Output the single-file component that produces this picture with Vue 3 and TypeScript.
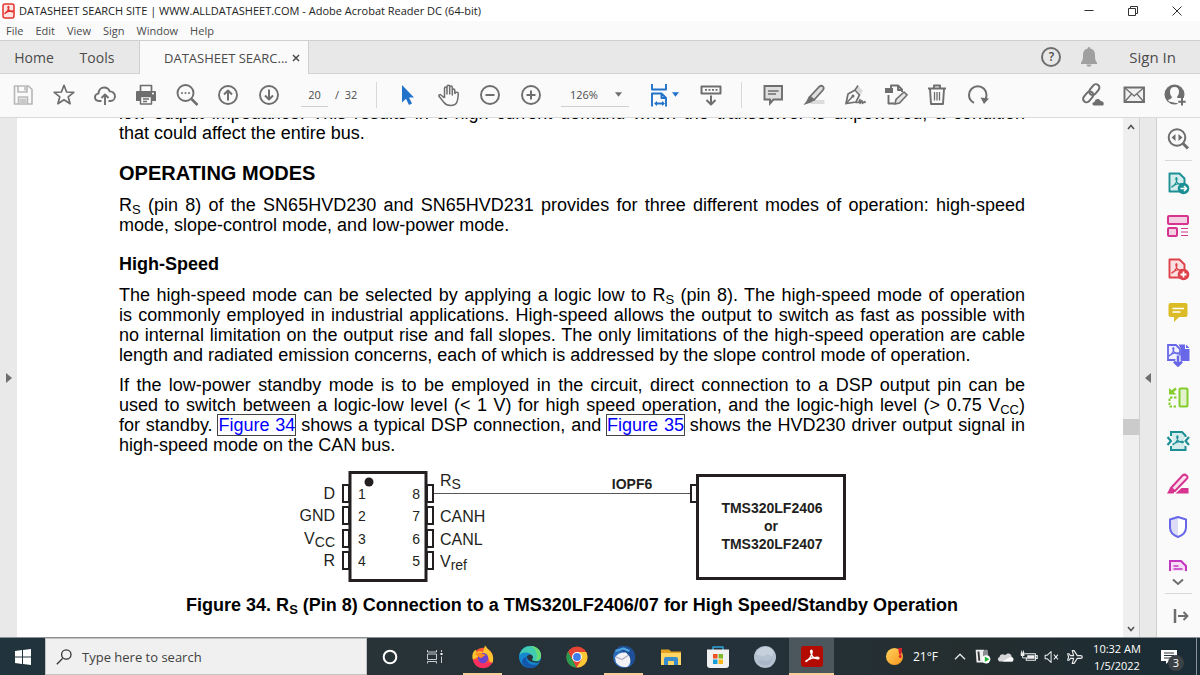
<script setup lang="ts">
import { ref } from 'vue'

interface Tool {
  name: string
  icon: string
}

const G = '#6e6e6e'
const line = (d: string, color = G, width = 1.7) =>
  `<path d="${d}" fill="none" stroke="${color}" stroke-width="${width}" stroke-linejoin="round"/>`
const solid = (d: string, color = G) => `<path d="${d}" fill="${color}"/>`
const trefoil = (color: string, width: number) =>
  line('M6 17c3-2 5.600-6 5.800-9.500.1-2-1.600-2-1.400 0 .3 3.500 3 6.500 6.800 7 2 .2 1.800-1.500 0-1.500-3.800 0-7.500 1.200-10.700 3-1.300.8-.9 1.500-.5 1z', color, width)

const fileTools: Tool[] = [
  { name: 'Save', icon: line('M3.500 3h14l3.500 3.500V21h-17.500zM7 3v6h9V3M7.500 21v-7h9v7', '#b9b9b9') + solid('M13 4h2v3.500h-2zM8.500 15.500h7V20h-7z', '#c9c9c9') },
  { name: 'Bookmark', icon: line('M12 2.300l2.600 6.700 7.200.3-5.600 4.500 1.900 6.900L12 16.800l-6.100 3.900 1.900-6.900-5.600-4.500 7.200-.3z') },
  { name: 'Upload to cloud', icon: line('M8.500 18H6.200C3.500 18 2 16.300 2 14.300s1.500-3.500 3.500-3.700C5.600 6.800 8 4.500 11.200 4.500c2.800 0 4.600 1.500 5.500 3.900 3-.1 5.300 2 5.300 4.800 0 2.700-2 4.800-4.700 4.800h-1.800M12 22v-10M8.500 15l3.500-3.500 3.500 3.500', G, 1.900) },
  { name: 'Print', icon: line('M6.500 8V2.500h11V8') + solid('M3 8h18q1 0 1 1v9h-4v-4H6v4H2V9q0-1 1-1z') + line('M6.500 13.500h11v7.500h-11zM9 16h6M9 18.500h4', G, 1.500) + '<circle cx="19" cy="10.500" r="1" fill="#fff"/>' },
  { name: 'Find', icon: '<circle cx="10.500" cy="10" r="8" fill="none" stroke="#6e6e6e" stroke-width="1.900"/>' + line('M16.500 16l6 6', G, 2.500) + '<g fill="#6e6e6e"><circle cx="7" cy="10" r="1"/><circle cx="10.500" cy="10" r="1"/><circle cx="14" cy="10" r="1"/></g>' },
  { name: 'Previous page', icon: '<circle cx="12" cy="12" r="9" fill="none" stroke="#6e6e6e" stroke-width="1.900"/>' + line('M12 17.500V7.500M8 11.500l4-4 4 4', G, 2) },
  { name: 'Next page', icon: '<circle cx="12" cy="12" r="9" fill="none" stroke="#6e6e6e" stroke-width="1.900"/>' + line('M12 6.500v10M8 12.500l4 4 4-4', G, 2) },
]

const viewTools: Tool[] = [
  { name: 'Select', icon: solid('M6 2v17.500l4-3.800 3 6.300 3-1.400-3-6.100h5z', '#2272c9') },
  { name: 'Pan', icon: line('M7.500 13V5.500c0-2 2.500-2 2.500 0V11 3.700c0-2 2.700-2 2.700 0V11 4.500c0-2 2.600-2 2.600 0V12 7.500c0-2 2.500-2 2.500 0v3M7.500 15V7.500M17.800 11c.5-2.500 3.700-2.300 3.500 0-.2 2-.3 5.500-1.300 8-1 2.500-3 3.500-6.500 3.500s-5-1-6.500-3l-5-6.200c-.8-1.300 1-2.300 2-1.300L7.500 15', G, 1.500) },
  { name: 'Zoom out', icon: '<circle cx="12" cy="12" r="9" fill="none" stroke="#6e6e6e" stroke-width="1.900"/>' + line('M7.500 12h9', G, 2) },
  { name: 'Zoom in', icon: '<circle cx="12" cy="12" r="9" fill="none" stroke="#6e6e6e" stroke-width="1.900"/>' + line('M7.500 12h9M12 7.500v9', G, 2) },
]

const fitIcon = line('M5 1v5.500h14V1M5 23.500V10.500h9.500l4.500 4.500v8.500M14.500 10.500V15H19M9 20.500h7.500', '#2272c9', 1.900) + solid('M7 20.500l3-2.500v5zM18 20.500l-3-2.500v5z', '#2272c9')
const readIcon = line('M2.500 3.500h19v7h-19zM12 12.500v9M7.500 17l4.500 4.500 4.500-4.500', G, 2) + line('M6 6.800h2M9.500 6.800h2M13 6.800h2M16.500 6.800h2', G, 1.700)

const markupTools: Tool[] = [
  { name: 'Comment', icon: '<path d="M3.500 3h17.500v13.500h-8.500L9 20.500v-4H3.500z" fill="#dedede" stroke="#6e6e6e" stroke-width="1.900"/>' + line('M7 8h10.500M7 11h8', G, 1.300) },
  { name: 'Highlight', icon: solid('M10 17h12.500v4H8z', '#dcdcdc') + '<path d="M8 13.500L17.500 3.500q2-1.500 3.500 0t0 3.500L12 17z" fill="#dedede" stroke="#6e6e6e" stroke-width="1.700"/>' + solid('M7 13l5 4.500-3 2L1.500 22l3-4z') },
  { name: 'Sign', icon: '<path d="M3 20.500l2-9.500 7-4 4.500 5-3.500 7z" fill="#fafafa" stroke="#6e6e6e" stroke-width="1.700"/>' + solid('M12.500 6.500l2.500-4 5 5.500-3 3.500z', '#dadada') + line('M12 7l3-4.500M3.500 20l6-6.500M12.500 19.500h3l1.500-3v4l2-3 .500 3 2-2 1 1.500', G, 1.500) + '<circle cx="10" cy="13" r="1.500" fill="#6e6e6e"/>' },
  { name: 'Edit PDF', icon: solid('M1 5h8v5H1z') + line('M7 5V2.500h7l4 4V9M14 2.500V7h4M4.500 12v8.500h6', G, 1.900) + '<path d="M11 21l1-4.500 8-7.500 3 3-7.500 8z" fill="#e6e6e6" stroke="#6e6e6e" stroke-width="1.600"/>' },
  { name: 'Delete', icon: line('M3 5.500h18M9 5V2.500h6V5M5 6l1 15h12l1-15', G, 1.900) + line('M9.500 9v8.500M12 9v8.500M14.500 9v8.500', G, 1.300) },
  { name: 'Rotate', icon: line('M8 19.800c-3-1.500-5-4-5-7.800 0-5 4-8.800 8.800-8.800S20.500 7 20.500 12c0 2-.5 3.500-1.500 5', G, 2) + solid('M14.500 14.500l8.500 1-5 5.500z') },
]

const shareTools: Tool[] = [
  { name: 'Share link', icon: '<g transform="rotate(-50 10 11)">' + '<rect x="9.500" y="7.300" width="12" height="6.800" rx="3.400" fill="none" stroke="#6e6e6e" stroke-width="2"/><rect x="0" y="7.300" width="12" height="6.800" rx="3.400" fill="none" stroke="#6e6e6e" stroke-width="2"/></g>' + solid('M13 22.500c-2.300-.5-2-3.500.5-3.500.3-3.500 5-4.200 6-1 3-.2 4.200 3 2.500 4.500z') },
  { name: 'Email', icon: '<path d="M2.500 4.500h19.500v14.500h-19.500z" fill="#f1f1f1" stroke="#6e6e6e" stroke-width="1.900"/>' + line('M3 5l9.200 8L21.500 5M3 18.500l6.500-7.500M21.500 18.500L15 11', G, 1.300) },
  { name: 'Add people', icon: '<circle cx="11.500" cy="11.500" r="10" fill="#6e6e6e"/>' + '<path d="M11.500 4c3 0 4.500 2 4.500 4.800 0 2-.7 3.600-1.800 4.700-.3 1.500.2 1.900 3.800 3.300l-1 3.200h-4l-7-1.500-1-1.500c3-1.300 4-1.800 3.800-3.300C7.500 12.500 7 10.800 7 8.800 7 6 8.500 4 11.500 4z" fill="#fafafa"/>' + solid('M14.500 15h9.500v9h-9.500z', '#fafafa') + line('M19 15v7.500M15.200 18.800h7.500', G, 2) },
]

const doc = (c: string, bg: string) =>
  `<path d="M3.500 2.500h10l5 5V20.500h-15z" fill="${bg}" stroke="${c}" stroke-width="1.900" stroke-linejoin="round"/>` +
  `<g transform="translate(1 1.500) scale(.85)">${trefoil(c, 1.300)}</g>`

const sideTools: Tool[] = [
  { name: 'Export PDF', icon: doc('#1c9094', '#d5ecec') + '<circle cx="17.500" cy="17.500" r="5.800" fill="#1c9094"/>' + line('M14.500 17.500h5.500M18 15l2.500 2.500L18 20', '#fff', 1.600) },
  { name: 'Organize Pages', icon: '<g fill="#f4cfe3" stroke="#d6348e" stroke-width="2"><rect x="2" y="2" width="20" height="8" rx="1"/><rect x="2" y="14" width="9" height="8" rx="1"/></g>' + line('M15 14.500h7M15 18h7M15 21.500h7', '#d6348e', 1.200) },
  { name: 'Create PDF', icon: doc('#dd4149', '#fbe0e1') + '<circle cx="17.500" cy="17.500" r="5.800" fill="#dd4149"/>' + line('M14.500 17.500h6M17.500 14.500v6', '#fff', 1.800) },
  { name: 'Comment', icon: solid('M4.500 3h15q2 0 2 2v10q0 2-2 2H13l-5 5v-5H4.500q-2 0-2-2V5q0-2 2-2z', '#dcbc26') + line('M6.500 8.500h11.500M6.500 12h8', '#fff', 1.700) },
  { name: 'Combine Files', icon: '<path d="M2 2h8l4 4v11H2z" fill="#efefff" stroke="#6767e8" stroke-width="1.800"/>' + '<g transform="translate(-1 0) scale(.75)">' + trefoil('#6767e8', 1.500) + '</g>' + solid('M12.500 1.500H19V6h4.500v12H15V6z', '#6767e8') + solid('M20 1.500l3.500 3.500H20z', '#6767e8') + line('M12 12.500v10M8 18.500l4 4 4-4', '#fafafa', 5) + line('M12 12.500v9.500M8 18.500l4 4 4-4', '#6767e8', 2.600) },
  { name: 'Compare', icon: '<rect x="13.500" y="2.500" width="8" height="18" rx="1" fill="#e3f3cd" stroke="#84cd2f" stroke-width="2"/>' + '<path d="M10.500 11.500h-7v9h8" fill="none" stroke="#84cd2f" stroke-width="2" stroke-dasharray="2.500 1.500"/>' + line('M10 2.500L5 6.500', '#84cd2f', 2.500) + solid('M3 2v6.500h7.500z', '#84cd2f') },
  { name: 'Compress PDF', icon: solid('M5 4h11l3.500 3-2.500 5 2.500 5v3H5v-3l2.500-5L5 7z', '#d5ecec') + '<path d="M5 7V3h11l3.500 3.500V8M5 17v4h14.500v-4" fill="none" stroke="#1c9094" stroke-width="2"/>' + '<g transform="translate(2.500 2) scale(.8)">' + trefoil('#1c9094', 1.500) + '</g>' + line('M1.500 8l3.500 4-3.500 4M23 8l-3.500 4 3.500 4', '#1c9094', 2.200) },
  { name: 'Redact', icon: '<path d="M5 16L16.500 3.500q2-1.800 4 0t0 3.500L9 19z" fill="#fae0ed" stroke="#d6348e" stroke-width="2"/>' + solid('M1 21.500l3-5.500 5 3-1.500 2.500zM9.500 21.500l6-5.500H22.500v5.500z', '#d6348e') },
  { name: 'Protect', icon: '<path d="M12 2l8 2.500v8c0 4.500-4 8-8 9.500-4-1.500-8-5-8-9.500v-8z" fill="#fff"/>' + solid('M12 2v20c-4-1.500-8-5-8-9.500v-8z', '#dcdcf6') + line('M12 2l8 2.500v8c0 4.500-4 8-8 9.500-4-1.500-8-5-8-9.500v-8z', '#6767e8', 2) },
  { name: 'Fill & Sign', icon: '<path d="M4 21V3h11l5 5v13z" fill="#f6dcf5" stroke="#c235be" stroke-width="2"/>' + line('M7.500 8h5M7.500 11h9', '#c235be', 1.500) },
]

const sideSearch = '<circle cx="11" cy="10.500" r="8.300" fill="none" stroke="#6e6e6e" stroke-width="2"/>' + line('M17 16.500l5 5', G, 3) + solid('M5.500 10.500l4-3.500v7zM16.500 10.500l-4-3.500v7z')
const collapse = line('M9 5v14', G, 2.500) + line('M12 12h9M17.500 8l4 4-4 4', G, 2)

const apps: (Tool & { state?: string })[] = [
  { name: 'Firefox', state: 'open', icon: '<circle cx="12" cy="13" r="10.200" fill="#fd5a32"/>' + solid('M2 15C.5 10 2 7 4.500 4.500l1 3C8 5.500 10 6 12 7l2-6.500c2 2 2 3 5 5.500 3 3.500 4 8 2.500 12-2 1-3-1-4-5-1-2-4-4-6.500-4z', '#ffc52f') + solid('M2 14c1 6 6 9.500 11 9 4-.4 7-2.500 8.500-6L16 18z', '#fb2e61') + '<circle cx="12" cy="13" r="5.200" fill="#6c45ce"/>' + solid('M4 9c3-2 6-1 8 0l3 1-3 1.500c-1 2-3 1.500-4 .5z', '#ff8a22') },
  { name: 'Microsoft Edge', icon: '<circle cx="12" cy="12" r="11" fill="#1687cf"/>' + solid('M1.500 10C3 4 8 .8 13 1c6 .3 10.500 5 10 10.500-.4 4-5 5.500-8.500 4-1.500-.7 1-2 .3-4C13 7 5 6 1.500 10z', '#42cbb1') + solid('M13 1c6 .3 10.500 5 10 10.500-.4 3-3 4.500-5.500 4.500C21 10 18 4 13 1z', '#68dc72') + solid('M8.500 12c-1 5 4 9 11.500 7.500-3 4-9 4.500-13 2C2 18 4 12.500 8.500 12z', '#1458ac') + solid('M14.500 15.500c-1.500-.8 1-2 .3-4-1-2.500-4.500-2.200-6-.2 0 3.500 3.500 7 12.500 6.300l1-1.600c-2.500 1-5.500.5-7.800-.5z', '#26333a') },
  { name: 'Google Chrome', icon: '<circle cx="12" cy="12" r="10.500" fill="#e54435"/>' + solid('M3 6.500L11.500 22.500C4 22.500 -1.500 14 3 6.500z', '#299c50') + solid('M12 7h9.200c4 8-2 16-9.700 15.500L17 14z', '#fcc934') + '<circle cx="12" cy="12" r="5" fill="#fff"/><circle cx="12" cy="12" r="3.900" fill="#3f7de8"/>' },
  { name: 'Thunderbird', state: 'open', icon: '<circle cx="12" cy="12" r="10.800" fill="#2b6cb8"/>' + solid('M8 1c5 0 10 0 13 4s3 12-2 16C19 12 16 7 4 5z', '#1e4f96') + solid('M3 12.500c2-3.500 6-5.500 11-5l3.500 4c1.500 4 1 7-1.500 10-5 1.500-10-.5-12-4z', '#f2f2f7') + line('M4 12l6 2.500 6-4', '#aaa9bf', 1.200) + line('M3.500 6l8-2.500 6 2.500', '#4fa5e2', 2) },
  { name: 'File Explorer', icon: solid('M2 4.500h8l2 2h10V20H2z', '#e2a322') + solid('M2 8h20v12H2z', '#ffd563') + solid('M5 20v-6q0-2 2-2h10q2 0 2 2v6h-4v-4H9v4z', '#388cce') },
  { name: 'Microsoft Store', icon: line('M7 5V2h10v3', '#30a5dc', 1.500) + '<path d="M1 4.500h22V20q0 3-3 3H4q-3 0-3-3z" fill="#f1f1f1"/><path fill="#f05023" d="M7 9h4.500v4.500H7z"/><path fill="#7db928" d="M12.500 9H17v4.500h-4.500z"/><path fill="#169edb" d="M7 14.500h4.500V19H7z"/><path fill="#fbb718" d="M12.500 14.500H17V19h-4.500z"/>' },
  { name: 'Moon', icon: '<circle cx="12" cy="12" r="11" fill="#b4c1d1"/>' + solid('M3 8c4-7 13-8 17-2 1 5-1 6-4 4s-4 3-7 1-4 1-6-3z', '#c5d0dc') + solid('M5 16c4-3 8 2 12-1s2 4-3 5-8-1-9-4z', '#a9b6c9') },
  { name: 'Adobe Acrobat', state: 'active', icon: '<rect x="1" y="1" width="22" height="21" rx="3" fill="#b30b00"/>' + '<g transform="translate(.3 -.7)">' + trefoil('#fff', 1.500) + '</g>' },
]

const trayIcons: Tool[] = [
  { name: 'Show hidden icons', icon: line('M6.500 14.500L12 9l5.500 5.500', '#eee', 1.300) },
  { name: 'Virtual machine', icon: solid('M4 4h9l1 14H5z', '#eee') + solid('M6 6h2l1 10H7z', '#333') + solid('M14 4h3l1 8-6 4V6z', '#8b8f92') + '<circle cx="15.500" cy="14.500" r="4.500" fill="#fff"/>' + solid('M14 11.500l5 3-5 3z', '#22b833') },
  { name: 'OneDrive', icon: solid('M6 17c-3 0-4-4-1-5 0-3 4-4 6-2 3-4 8-1 7 2 3 0 3 5 0 5z', '#d7d7d7') + solid('M8 17l9-5c3 0 4 5 1 5z', '#fff') },
  { name: 'Battery', icon: line('M7 8.500h12v7H9v-3M19.500 10.500h1.500v3h-1.500', '#eee', 1.200) + solid('M10 10h8v4h-8zM3 7h4v4H3z', '#eee') + line('M5 10v3h5M4 5v3M6 5v3', '#eee', 1) },
  { name: 'Volume muted', icon: line('M4.500 10h2.500l4-4v12l-4-4H4.500zM14 9.500l4.500 5M18.500 9.500l-4.500 5', '#eee', 1.100) },
  { name: 'Airplane mode', icon: line('M20 12c0 1-1 1.500-2 1.500h-3.500L11 19H9l1.500-5.500H7L5.500 15.500H4L5 12 4 8.500h1.500L7 10.500h3.500L9 5h2l3.500 5.500H18c1 0 2 .5 2 1.500z', '#eee', 1.200) },
]

const leftPins = [
  { label: 'D', sub: '', pin: '1', right: '8', y: 493 },
  { label: 'GND', sub: '', pin: '2', right: '7', y: 515 },
  { label: 'V', sub: 'CC', pin: '3', right: '6', y: 538 },
  { label: 'R', sub: '', pin: '4', right: '5', y: 560 },
]
const rightPins = [
  { label: 'R', sub: 'S', y: 486 },
  { label: 'CANH', sub: '', y: 522 },
  { label: 'CANL', sub: '', y: 545 },
  { label: 'V', sub: 'ref', y: 567 },
]

const menus = ['File', 'Edit', 'View', 'Sign', 'Window', 'Help']
const pageNumber = ref('20')
const zoom = ref('126%')
const query = ref('')
</script>

<template>
  <div class="screen">
    <header class="titlebar">
      <svg class="appicon" viewBox="0 0 14 16">
        <rect x="1" y="1" width="11" height="14" rx="2" fill="#fde6e4" stroke="#e2342d" stroke-width="1.500" />
        <g transform="translate(-.8 -.6) scale(.65)" v-html="trefoil('#e2342d', 2)"></g>
      </svg>
      <span class="title">DATASHEET SEARCH SITE | WWW.ALLDATASHEET.COM - Adobe Acrobat Reader DC (64-bit)</span>
      <div class="window-controls">
        <button aria-label="Minimize"><svg viewBox="0 0 12 12"><path d="M1.500 5.500h9" /></svg></button>
        <button aria-label="Restore"><svg viewBox="0 0 12 12"><path d="M1.500 3.500h7v7h-7zM3.500 3.500v-2h7v7h-2" /></svg></button>
        <button aria-label="Close"><svg viewBox="0 0 12 12"><path d="M1.500 1.500l9 9M10.500 1.500l-9 9" /></svg></button>
      </div>
    </header>

    <nav class="menubar" aria-label="Menu">
      <button v-for="m in menus" :key="m">{{ m }}</button>
    </nav>

    <div class="tabbar">
      <button class="home">Home</button>
      <button class="tools">Tools</button>
      <div class="tab">
        <span>DATASHEET SEARC...</span>
        <button aria-label="Close tab"><svg viewBox="0 0 8 8"><path d="M1 1l6 6M7 1l-6 6" /></svg></button>
      </div>
      <div class="account">
        <button aria-label="Help" class="help"><span>?</span></button>
        <button aria-label="Notifications">
          <svg class="icon" viewBox="0 0 24 24"><path d="M12 2c1 0 1.500.8 1.500 1.800C17 4.500 18 7 18 10.500c0 4 .5 5 2 7V19H4v-1.500c1.500-2 2-3 2-7C6 7 7 4.500 10.500 3.800 10.500 2.800 11 2 12 2zM9.500 19.500h5c0 3-5 3-5 0z" fill="#a0a0a0" /></svg>
        </button>
        <button class="signin">Sign In</button>
      </div>
    </div>

    <div class="toolbar">
      <button v-for="t in fileTools" :key="t.name" class="tool" :aria-label="t.name">
        <svg class="icon" viewBox="0 0 24 24" v-html="t.icon"></svg>
      </button>
      <label class="pager"><input v-model="pageNumber" aria-label="Page number" /><span>/&nbsp; 32</span></label>
      <i class="separator"></i>
      <button v-for="t in viewTools" :key="t.name" class="tool" :aria-label="t.name">
        <svg class="icon" viewBox="0 0 24 24" v-html="t.icon"></svg>
      </button>
      <div class="zoom">
        <select v-model="zoom" aria-label="Zoom level"><option>126%</option></select>
        <svg viewBox="0 0 8 5"><path d="M0 0h8L4 5z" fill="#6e6e6e" /></svg>
      </div>
      <button class="fit" aria-label="Fit width">
        <svg class="icon" viewBox="0 0 24 24" v-html="fitIcon"></svg>
        <svg class="caret" viewBox="0 0 8 5"><path d="M0 0h8L4 5z" fill="#2272c9" /></svg>
      </button>
      <button class="tool" aria-label="Read mode"><svg class="icon" viewBox="0 0 24 24" v-html="readIcon"></svg></button>
      <i class="separator"></i>
      <button v-for="t in markupTools" :key="t.name" class="tool" :aria-label="t.name">
        <svg class="icon" viewBox="0 0 24 24" v-html="t.icon"></svg>
      </button>
      <div class="share">
        <button v-for="t in shareTools" :key="t.name" class="tool" :aria-label="t.name">
          <svg class="icon" viewBox="0 0 24 24" v-html="t.icon"></svg>
        </button>
      </div>
    </div>

    <main class="viewer">
      <button class="gutter left" aria-label="Show navigation pane"><svg viewBox="0 0 6 10"><path d="M0 0l6 5-6 5z" fill="#6e6e6e" /></svg></button>
      <article class="page">
        <p>
          <span class="full">low output impedance. This results in a high current demand when the transceiver is unpowered, a condition</span>
          <span>that could affect the entire bus.</span>
        </p>
        <h1>OPERATING MODES</h1>
        <p>
          <span class="full">R<sub>S</sub> (pin 8) of the SN65HVD230 and SN65HVD231 provides for three different modes of operation: high-speed</span>
          <span>mode, slope-control mode, and low-power mode.</span>
        </p>
        <h2>High-Speed</h2>
        <p>
          <span class="full">The high-speed mode can be selected by applying a logic low to R<sub>S</sub> (pin 8). The high-speed mode of operation</span>
          <span class="full">is commonly employed in industrial applications. High-speed allows the output to switch as fast as possible with</span>
          <span class="full">no internal limitation on the output rise and fall slopes. The only limitations of the high-speed operation are cable</span>
          <span>length and radiated emission concerns, each of which is addressed by the slope control mode of operation.</span>
        </p>
        <p class="next">
          <span class="full">If the low-power standby mode is to be employed in the circuit, direct connection to a DSP output pin can be</span>
          <span class="full">used to switch between a logic-low level (&lt; 1 V) for high speed operation, and the logic-high level (&gt; 0.75 V<sub>CC</sub>)</span>
          <span class="full">for standby. <a href="#figure-34">Figure 34</a> shows a typical DSP connection, and <a href="#figure-35">Figure 35</a> shows the HVD230 driver output signal in</span>
          <span>high-speed mode on the CAN bus.</span>
        </p>
        <figure id="figure-34">
          <svg class="diagram" viewBox="292 466 560 120">
            <g fill="#fff" stroke="#231f20">
              <rect x="350" y="472.500" width="76" height="108" stroke-width="3" />
              <g stroke-width="2">
                <rect v-for="p in leftPins" :key="p.pin" x="343" :y="p.y - 8" width="6" height="17" />
                <rect v-for="p in leftPins" :key="p.right" x="427" :y="p.y - 8" width="6" height="17" />
                <rect x="691" y="485" width="6" height="17" />
              </g>
              <rect x="697.500" y="475.500" width="147" height="103" stroke-width="3" />
              <path d="M434 493.500h256" stroke="#5a5758" stroke-width="1" />
            </g>
            <circle cx="369" cy="482" r="4.500" fill="#231f20" />
            <g class="labels">
              <text v-for="p in leftPins" :key="p.label" x="335" :y="p.y + 6" text-anchor="end">{{ p.label }}<tspan v-if="p.sub" class="small" dy="3">{{ p.sub }}</tspan></text>
              <text v-for="p in rightPins" :key="p.y" x="440" :y="p.y">{{ p.label }}<tspan v-if="p.sub" class="small" dy="3">{{ p.sub }}</tspan></text>
              <g class="small">
                <text v-for="p in leftPins" :key="p.pin" x="358" :y="p.y + 6">{{ p.pin }}</text>
                <text v-for="p in leftPins" :key="p.right" x="420" :y="p.y + 6" text-anchor="end">{{ p.right }}</text>
              </g>
            </g>
            <g class="part">
              <text x="632" y="489">IOPF6</text>
              <text x="772" y="513">TMS320LF2406</text>
              <text x="771" y="531">or</text>
              <text x="772" y="549">TMS320LF2407</text>
            </g>
          </svg>
          <figcaption>Figure 34. R<sub>S</sub> (Pin 8) Connection to a TMS320LF2406/07 for High Speed/Standby Operation</figcaption>
        </figure>
      </article>
      <div class="scrollbar">
        <button aria-label="Scroll up"><svg viewBox="0 0 8 6"><path d="M1 5l3-3.500L7 5" /></svg></button>
        <div class="track"><i class="before"></i><i class="thumb"></i><i class="after"></i></div>
        <button aria-label="Scroll down"><svg viewBox="0 0 8 6"><path d="M1 1l3 3.500L7 1" /></svg></button>
      </div>
      <button class="gutter right" aria-label="Hide tools pane"><svg viewBox="0 0 6 10"><path d="M6 0L0 5l6 5z" fill="#6e6e6e" /></svg></button>
      <aside class="rail">
        <button class="find" aria-label="Search tools"><svg class="icon" viewBox="0 0 24 24" v-html="sideSearch"></svg></button>
        <hr />
        <div class="raillist">
          <button v-for="t in sideTools" :key="t.name" :aria-label="t.name">
            <svg class="icon" viewBox="0 0 24 24" v-html="t.icon"></svg>
          </button>
        </div>
        <button class="more" aria-label="More tools"><svg viewBox="0 0 12 8"><path d="M1 1.500l5 4.500 5-4.500" fill="none" stroke="#6e6e6e" stroke-width="2" /></svg></button>
        <hr />
        <button aria-label="Collapse tools pane"><svg class="icon" viewBox="0 0 24 24" v-html="collapse"></svg></button>
      </aside>
    </main>

    <footer class="taskbar">
      <button class="start" aria-label="Start">
        <svg viewBox="0 0 16 16"><path d="M0 2l7-1v6.500H0zM8 1l8-1v7.500H8zM0 8.500h7V15l-7-1zM8 8.500h8V16l-8-1z" fill="#fff" /></svg>
      </button>
      <label class="search">
        <svg viewBox="0 0 16 16"><path d="M6.500 9.500L.8 15.200M15 5.500a4.700 4.700 0 1 1-9.400 0 4.700 4.700 0 1 1 9.400 0z" /></svg>
        <input v-model="query" placeholder="Type here to search" aria-label="Type here to search" />
      </label>
      <button class="shell" aria-label="Cortana"><svg class="icon" viewBox="0 0 24 24"><circle cx="12" cy="12" r="6.300" fill="none" stroke="#fff" stroke-width="2" /></svg></button>
      <button class="shell" aria-label="Task view">
        <svg class="icon" viewBox="0 0 24 24"><path d="M3.500 5v2h9V5M3.500 18.500v-2h9v2M3.500 9h9v5.500h-9zM17.500 5v2M17.500 11.500V18" fill="none" stroke="#c9cdcf" stroke-width="1" /><path d="M16.500 8h2v2h-2z" fill="#fff" /></svg>
      </button>
      <button v-for="a in apps" :key="a.name" class="app" :class="a.state" :aria-label="a.name">
        <svg class="icon" viewBox="0 0 24 24" v-html="a.icon"></svg>
      </button>
      <div class="tray">
        <button class="weather">
          <svg viewBox="0 0 20 20">
            <defs><linearGradient id="sun" x1="0" y1="0" x2="1" y2="1"><stop offset="0" stop-color="#ffd45c" /><stop offset="1" stop-color="#f7941e" /></linearGradient></defs>
            <circle cx="10" cy="10" r="9" fill="url(#sun)" />
            <path d="M14 1h4l-.8 7h-2.400z" fill="#d9212c" /><circle cx="16" cy="10" r="1.500" fill="#d9212c" />
          </svg>
          <span>21°F</span>
        </button>
        <button v-for="t in trayIcons" :key="t.name" class="tray-icon" :aria-label="t.name">
          <svg viewBox="0 0 24 24" v-html="t.icon"></svg>
        </button>
        <button class="clock"><span>10:32 AM</span><span>1/5/2022</span></button>
        <button class="notice" aria-label="3 notifications">
          <svg viewBox="0 0 18 16"><path d="M1 1h16v11H9l-3 3v-3H1z" fill="#fff" /><path d="M4 4h10M4 6.500h10M4 9h6" stroke="#26333a" stroke-width="1" /></svg>
          <span class="badge">3</span>
        </button>
        <button class="desktop" aria-label="Show desktop"></button>
      </div>
    </footer>
  </div>
</template>

<style>
body {
  margin: 0;
}
</style>

<style scoped>
.screen {
  display: flex;
  flex-direction: column;
  height: 100vh;
  overflow: hidden;
  background: #fff;
  font-family: 'Open Sans', 'Noto Sans', sans-serif;
  color: #4b4b4b;
}
button,
input,
select {
  margin: 0;
  padding: 0;
  border: 0;
  background: none;
  font: inherit;
  color: inherit;
  outline: none;
}
button {
  display: flex;
  align-items: center;
  justify-content: center;
  flex: none;
}
svg {
  display: block;
  flex: none;
}
.icon {
  width: 24px;
  height: 24px;
}
.titlebar {
  display: flex;
  align-items: center;
  flex: none;
  height: 21px;
  padding-left: 2px;
}
.appicon {
  width: 14px;
  height: 16px;
  margin-right: 3px;
}
.title {
  font-size: 11px;
  color: #222;
  white-space: nowrap;
}
.window-controls {
  display: flex;
  margin-left: auto;
  padding-right: 1px;
}
.window-controls button {
  width: 44px;
  height: 20px;
}
.window-controls svg {
  width: 12px;
  height: 12px;
  fill: none;
  stroke: #333;
}
.menubar {
  display: flex;
  align-items: center;
  flex: none;
  gap: 12px;
  height: 19px;
  padding-left: 6px;
  background: #fafafa;
  font-size: 11px;
}
.tabbar {
  display: flex;
  align-items: stretch;
  flex: none;
  height: 32px;
  border-top: 1px solid #d0d0d0;
  border-bottom: 1px solid #d3d3d3;
  background: #e8e8e8;
  font-size: 14px;
}
.home {
  width: 68px;
}
.tools {
  width: 58px;
  margin-right: 13px;
}
.tab {
  display: flex;
  align-items: center;
  justify-content: space-between;
  box-sizing: border-box;
  width: 170px;
  margin-bottom: -1px;
  padding: 0 8px 0 24px;
  border: solid #d0d0d0;
  border-width: 0 1px;
  background: #fafafa;
  font-size: 13px;
}
.tab svg {
  width: 8px;
  height: 8px;
  stroke: #4b4b4b;
  stroke-width: 1.500;
}
.account {
  display: flex;
  align-items: center;
  margin-left: auto;
  padding-right: 24px;
}
.help span {
  box-sizing: border-box;
  width: 20px;
  height: 20px;
  border: 2px solid #6e6e6e;
  border-radius: 50%;
  font-size: 12px;
  font-weight: 600;
  line-height: 16px;
}
.help {
  margin-right: 16px;
}
.signin {
  margin-left: 28px;
  font-size: 15px;
}
.toolbar {
  display: flex;
  align-items: center;
  flex: none;
  box-sizing: border-box;
  height: 44px;
  padding: 0 5px 2px 2px;
  border-bottom: 1px solid #dadada;
  background: #fafafa;
  font-size: 11px;
}
.tool {
  width: 41px;
  height: 41px;
}
.pager {
  display: flex;
  align-items: center;
  gap: 7px;
  width: 65px;
  margin-left: 12px;
}
.pager input {
  width: 27px;
  height: 24px;
  border-bottom: 1px solid #d0d0d0;
  text-align: center;
}
.separator {
  width: 1px;
  height: 26px;
  margin: 0 10px;
  background: #d8d8d8;
}
.zoom {
  display: flex;
  align-items: center;
  width: 68px;
  height: 24px;
  margin-left: 10px;
  border-bottom: 1px solid #d0d0d0;
}
.zoom select {
  appearance: none;
  width: 54px;
  padding-left: 9px;
}
.zoom svg {
  width: 7px;
  height: 5px;
}
.fit {
  gap: 1px;
  margin-left: 18px;
  margin-right: 11px;
}
.caret {
  width: 7px;
  height: 5px;
}
.share {
  display: flex;
  margin-left: auto;
}
.viewer {
  display: flex;
  flex: 1;
  min-height: 0;
}
.gutter {
  width: 17px;
  background: #e9e9e9;
}
.gutter svg {
  width: 6px;
  height: 10px;
}
.gutter.right {
  width: 18px;
  border: solid #cfcfcf;
  border-width: 0 1px;
}
.page {
  flex: 1;
  min-width: 0;
  overflow: hidden;
  padding: 0 98px 0 102px;
  font-family: 'Liberation Sans', Arial, sans-serif;
  font-size: 18px;
  line-height: 20px;
  color: #000;
}
.page p {
  margin: 0;
}
.page p:first-child {
  margin-top: -15px;
}
.page p.next {
  margin-top: 10px;
}
.page p > span {
  display: block;
  white-space: nowrap;
}
.page p > .full {
  white-space: normal;
  text-align: justify;
  text-align-last: justify;
}
.page h1 {
  margin: 18px 0 10px;
  font-size: 20px;
  line-height: 24px;
}
.page h2 {
  margin: 19px 0 11px;
  font-size: 18px;
  line-height: 20px;
}
.page sub {
  font-size: 13px;
  line-height: 0;
  vertical-align: -3px;
}
.page a {
  color: #00f;
  text-decoration: none;
  outline: 1px solid #444;
}
.page figure {
  margin: 11px 0 0;
  text-align: center;
}
.diagram {
  width: 560px;
  height: 120px;
  margin: 0 auto 9px;
}
.labels {
  font-size: 16px;
  fill: #231f20;
}
.labels .small {
  font-size: 14px;
}
.part {
  font-size: 14px;
  font-weight: bold;
  fill: #231f20;
  text-anchor: middle;
}
figcaption {
  font-weight: bold;
  white-space: nowrap;
}
.scrollbar {
  display: flex;
  flex-direction: column;
  flex: none;
  width: 16px;
  background: #efefef;
}
.scrollbar button {
  width: 16px;
  height: 17px;
}
.scrollbar svg {
  width: 8px;
  height: 6px;
  fill: none;
  stroke: #505050;
  stroke-width: 1.500;
}
.track {
  display: flex;
  flex-direction: column;
  flex: 1;
}
.before {
  flex: 284;
}
.thumb {
  flex: 16;
  background: #cbcbcb;
}
.after {
  flex: 185;
}
.rail {
  display: flex;
  flex-direction: column;
  flex: none;
  width: 43px;
  background: #fafafa;
}
.rail button {
  width: 43px;
  height: 43px;
  padding-right: 2px;
}
.rail .find {
  height: 42px;
}
.rail hr {
  width: 27px;
  height: 1px;
  margin: 0 auto;
  border: 0;
  background: #d8d8d8;
}
.raillist {
  flex: 1;
  min-height: 0;
  overflow: hidden;
}
.rail .more {
  height: 22px;
}
.more svg {
  width: 12px;
  height: 8px;
}
.taskbar {
  display: flex;
  align-items: stretch;
  flex: none;
  height: 37px;
  border-top: 1px solid #8b9194;
  background: linear-gradient(90deg, #20343d, #283338 32%, #24313a 62%, #252e2f 80%, #1a2c36);
  color: #fff;
}
.start {
  width: 45px;
}
.start svg {
  width: 16px;
  height: 16px;
}
.search {
  display: flex;
  align-items: center;
  flex: none;
  box-sizing: border-box;
  gap: 10px;
  width: 322px;
  padding-left: 10px;
  border: 1px solid #c2c2c2;
  background: #f0f0f0;
}
.search svg {
  width: 16px;
  height: 16px;
  fill: none;
  stroke: #333;
  stroke-width: 1.300;
}
.search input {
  flex: 1;
  font-size: 13px;
  color: #333;
}
.search input::placeholder {
  color: #404040;
  opacity: 1;
}
.shell {
  width: 46px;
}
.app {
  width: 39px;
  margin: 0 4px;
  padding-top: 2px;
  border-bottom: 2px solid transparent;
}
.app.open {
  border-color: #fbcf9c;
}
.app.active {
  width: 45px;
  margin: 0 0 0 1px;
  border-color: #fbcf9c;
  background: #4c575d;
}
.tray {
  display: flex;
  align-items: stretch;
  margin-left: auto;
  font-size: 12px;
}
.weather {
  gap: 9px;
  margin-right: 10px;
}
.weather svg {
  width: 19px;
  height: 19px;
}
.tray-icon {
  width: 23px;
}
.tray-icon svg {
  width: 22px;
  height: 22px;
}
.clock {
  flex-direction: column;
  width: 62px;
  font-size: 11px;
  line-height: 17px;
}
.notice {
  position: relative;
  width: 48px;
  padding-right: 6px;
}
.notice svg {
  width: 18px;
  height: 16px;
}
.badge {
  position: absolute;
  right: 12px;
  bottom: 4px;
  width: 16px;
  height: 16px;
  border-radius: 50%;
  background: #3b4144;
  font-size: 11px;
  line-height: 16px;
}
.desktop {
  width: 4px;
  border-left: 1px solid #87919a;
}
</style>
